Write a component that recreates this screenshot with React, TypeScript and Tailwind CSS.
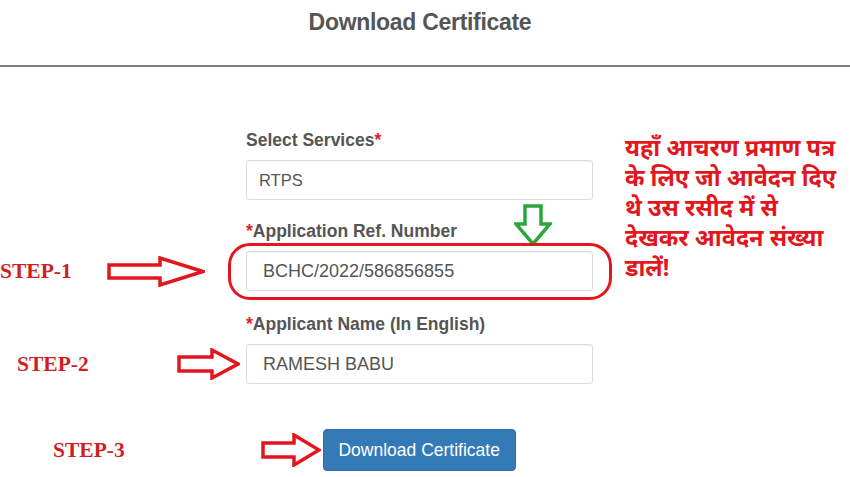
import React from 'react';

const RightArrow: React.FC<{ w: number; h: number; shaft: number; head: number }> = ({ w, h, shaft, head }) => {
  const m = h / 2;
  const hx = w - head;
  const pts = `2,${m - shaft / 2} ${hx},${m - shaft / 2} ${hx},2 ${w - 2},${m} ${hx},${h - 2} ${hx},${m + shaft / 2} 2,${m + shaft / 2}`;
  return (
    <svg width={w} height={h} viewBox={`0 0 ${w} ${h}`} className="shrink-0">
      <polygon points={pts} fill="white" stroke="#e3161d" strokeWidth={3.5} />
    </svg>
  );
};

const DownArrow: React.FC = () => (
  <svg width={38} height={42} viewBox="0 0 38 42">
    <polygon points="11,2 27,2 27,20 36,20 19,40 2,20 11,20" fill="white" stroke="#2aa63a" strokeWidth={3.5} />
  </svg>
);

const Step: React.FC<{ children: React.ReactNode }> = ({ children }) => (
  <span className="text-[21.5px] font-bold text-[#d11f1f] font-['Liberation_Serif','Times_New_Roman',serif]">{children}</span>
);

const Label: React.FC<{ text: string; star: 'before' | 'after' }> = ({ text, star }) => (
  <label className="block h-5 text-[17.5px] leading-5 font-bold text-[#555]">
    {star === 'before' && <span className="text-[#e02424]">*</span>}
    {text}
    {star === 'after' && <span className="text-[#e02424]">*</span>}
  </label>
);

const Box: React.FC<{ children: React.ReactNode; className?: string }> = ({ children, className }) => (
  <div className={`h-[40px] flex items-center rounded-[3px] border border-[#dcdcdc] bg-white shadow-[inset_0_1px_1px_rgba(0,0,0,0.06)] text-[#555] ${className ?? ''}`}>
    {children}
  </div>
);

export default function App() {
  return (
    <div className="w-[850px] h-[477px] overflow-hidden bg-white font-['Liberation_Sans',Arial,sans-serif]">
      {/* header */}
      <div className="h-[67px] border-b-2 border-[#7f7f7f] pt-[8px] pr-[10px] text-center">
        <h1 className="text-[23px] leading-7 font-bold text-[#555] tracking-[-0.3px]">Download Certificate</h1>
      </div>

      <div className="pt-[63px] flex flex-col">
        {/* services + ref number, with note on the right */}
        <div className="flex">
          <div className="w-[246px] flex items-end">
            <div className="h-[40px] w-full flex items-center justify-between pr-[41px]">
              <Step>STEP-1</Step>
              <RightArrow w={98} h={31} shaft={13} head={45} />
            </div>
          </div>

          <div className="w-[347px] flex flex-col">
            <Label text="Select Services" star="after" />
            <Box className="mt-[10px] pl-3 text-[16.5px]">RTPS</Box>
            <div className="mt-[21px] relative">
              <Label text="Application Ref. Number" star="before" />
              <div className="absolute left-[268px] top-[-17px]">
                <DownArrow />
              </div>
              <div className="mt-[10px] relative">
                <Box className="pl-4 text-[18px]">BCHC/2022/586856855</Box>
                <div className="absolute -left-[18px] -right-[19px] -top-[8px] -bottom-[9px] rounded-[22px] border-[3px] border-[#e3161d]" />
              </div>
            </div>
          </div>

          <p className="pl-[32px] pt-[2px] whitespace-nowrap text-[23.5px] leading-[30px] font-bold text-[#e3161d] font-['Noto_Sans','Noto_Sans_Devanagari','Lohit_Devanagari',sans-serif]">
            यहाँ आचरण प्रमाण पत्र<br />
            के लिए जो आवेदन दिए<br />
            थे उस रसीद में से<br />
            देखकर आवेदन संख्या<br />
            डालें!
          </p>
        </div>

        {/* applicant name */}
        <div className="mt-[23px] flex">
          <div className="w-[246px] flex items-end">
            <div className="h-[40px] w-full flex items-center justify-between pl-[17px] pr-[6px]">
              <Step>STEP-2</Step>
              <RightArrow w={63} h={32} shaft={14} head={28} />
            </div>
          </div>
          <div className="w-[347px] flex flex-col">
            <Label text="Applicant Name (In English)" star="before" />
            <Box className="mt-[10px] pl-4 text-[18px]">RAMESH BABU</Box>
          </div>
        </div>

        {/* submit */}
        <div className="mt-[45px] flex items-center pl-[53px]">
          <Step>STEP-3</Step>
          <div className="ml-[136px] mr-[2px]">
            <RightArrow w={60} h={34} shaft={14} head={27} />
          </div>
          <button className="h-[42px] w-[193px] rounded-[4px] bg-[#337ab7] border border-[#2e6da4] text-white text-[17.5px]">
            Download Certificate
          </button>
        </div>
      </div>
    </div>
  );
}
